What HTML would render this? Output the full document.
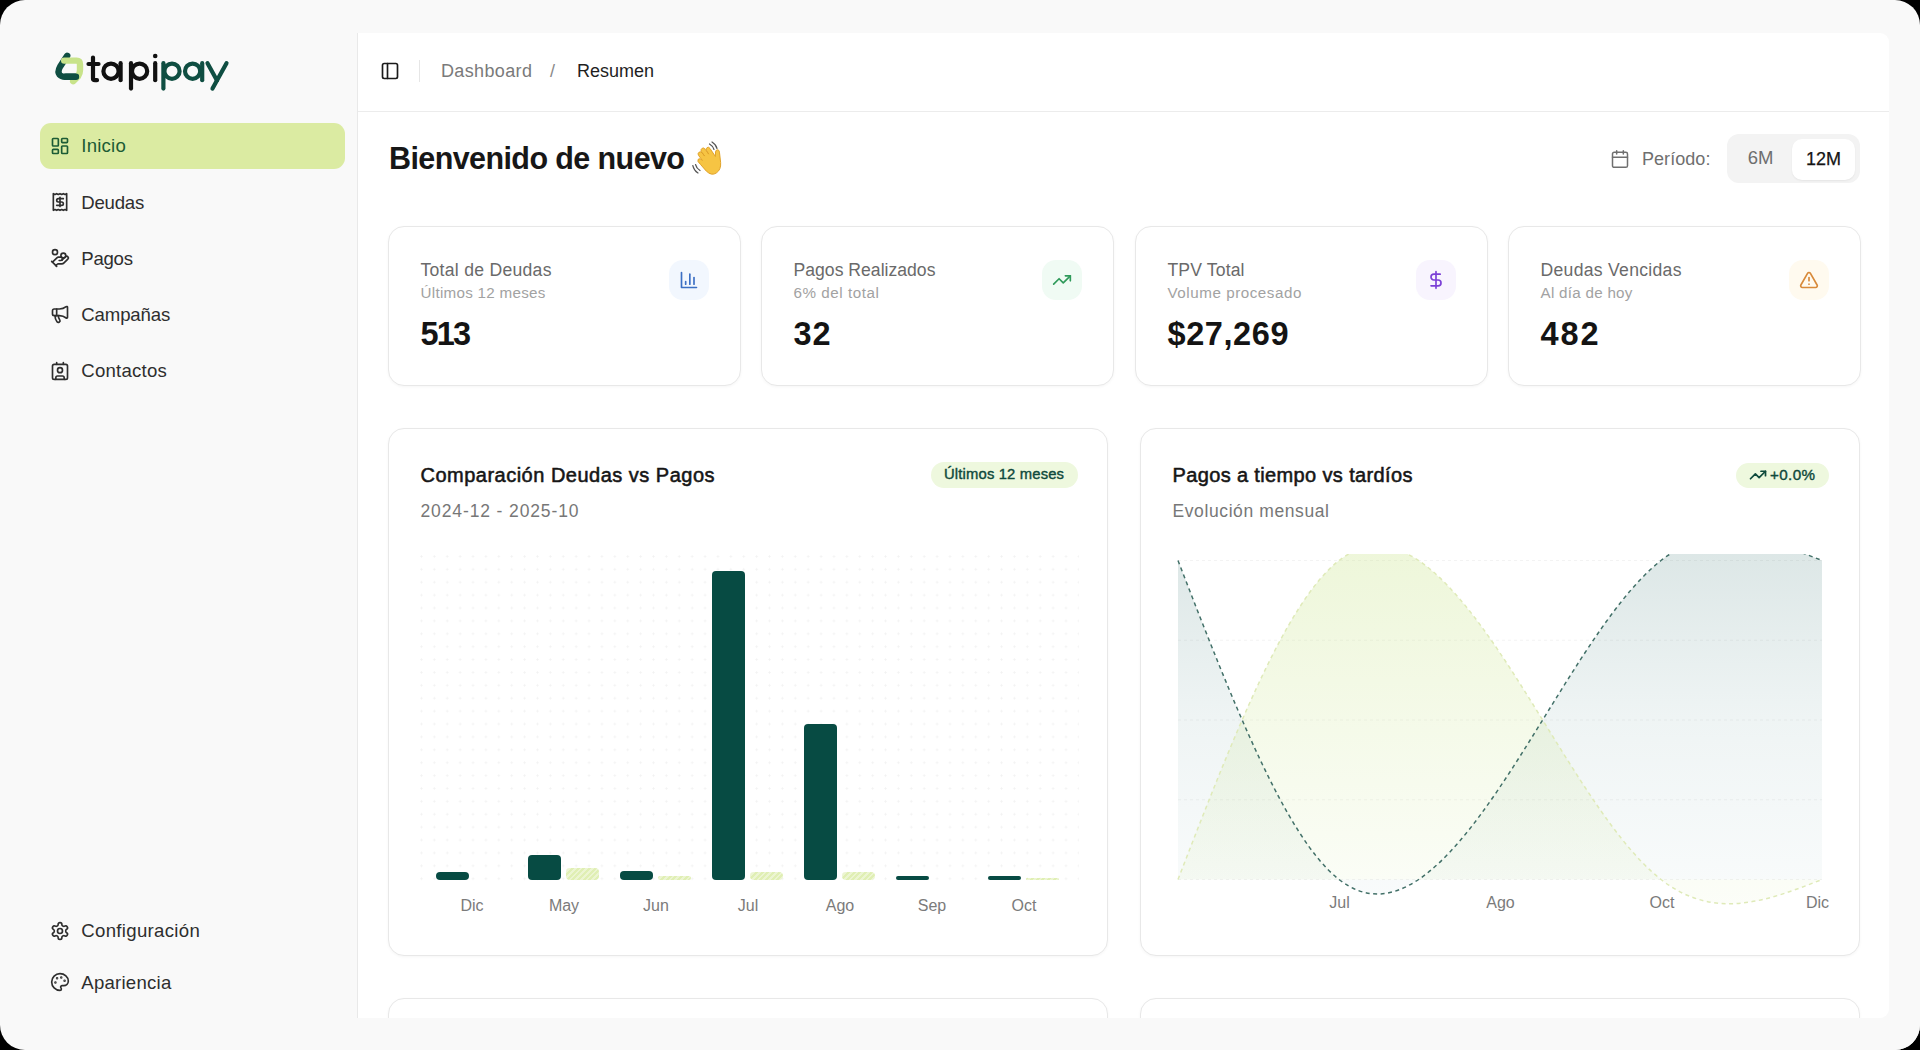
<!DOCTYPE html>
<html><head><meta charset="utf-8"><title>tapipay</title><style>
*{margin:0;padding:0;box-sizing:border-box}
html,body{width:1920px;height:1050px;overflow:hidden;background:#000}
body{font-family:"Liberation Sans",sans-serif}
#win{position:absolute;left:0;top:0;width:1920px;height:1050px;border-radius:25px;background:#f9f9f9;overflow:hidden}
.abs{position:absolute}
.ic{position:absolute;overflow:visible}
.t{position:absolute;white-space:nowrap;line-height:1}
#main{left:357px;top:33px;width:1532px;height:985px;background:#fff;border-left:1px solid #e9e9e9;border-radius:0 9px 9px 0;overflow:hidden}
.card{position:absolute;background:#fff;border:1.5px solid #e8e8e8;border-radius:16px;box-shadow:0 1px 3px rgba(0,0,0,.04)}
.dots{background-image:radial-gradient(circle,#f2f2f2 0.9px,transparent 1.2px);background-size:12.9px 12.9px;background-position:0 0}
.hatch{background:repeating-linear-gradient(135deg,#e0efb4 0 2px,#ecf5d2 2px 4px)}
</style></head>
<body>
<div id="win">
<svg class="ic" style="left:0;top:0;width:260px;height:110px" viewBox="0 0 260 110" fill="none" stroke-linecap="round" stroke-linejoin="round">
<path d="M67.2 55.8 L60.2 66.5 Q57.2 71.8 59.6 74.8 Q61.3 76.8 65 76.8 L76 76.8" stroke="#0f4e42" stroke-width="6.4"/>
<path d="M64.2 60.6 L76.6 60.6 Q80 60.6 80 64.2 L80 70 Q80 73.5 78 76.5 L73.2 81.2" stroke="#c8e38a" stroke-width="6.4"/>
<path d="M66 76.8 L76 76.8" stroke="#0f4e42" stroke-width="6.4"/>
<g stroke="#111" stroke-width="4.2">
<path d="M93 57.5 V78.5 Q93 80.2 95 80.2 H97"/><path d="M88.5 64 H98.5"/>
<circle cx="111" cy="71.2" r="7.6"/><path d="M120.6 63.2 V80.2"/>
<path d="M131 63.2 V88.6"/><circle cx="139.6" cy="71.2" r="7.6"/>
<path d="M155.2 63.2 V80.2"/>
</g>
<circle cx="155.2" cy="56" r="2.3" fill="#111"/>
<g stroke="#0f4e42" stroke-width="4.2">
<path d="M163.4 63.2 V88.6"/><circle cx="172" cy="71.2" r="7.6"/>
<circle cx="192.6" cy="71.2" r="7.6"/><path d="M202.2 63.2 V80.2"/>
<path d="M207.5 63.2 L217 80.5"/><path d="M226.5 63.2 L212.5 88.6"/>
</g>
</svg>
<div class="abs" style="left:40px;top:123px;width:305px;height:45.5px;border-radius:11px;background:#dbeba2"></div>
<svg class="ic" style="left:50px;top:135.7px;width:20px;height:20px" viewBox="0 0 24 24" fill="none" stroke="#1c5c35" stroke-width="2" stroke-linecap="round" stroke-linejoin="round"><rect width="7" height="9" x="3" y="3" rx="1"/><rect width="7" height="5" x="14" y="3" rx="1"/><rect width="7" height="9" x="14" y="12" rx="1"/><rect width="7" height="5" x="3" y="16" rx="1"/></svg>
<div class="t" style="left:81.30px;top:137.36px;font-size:18.6px;color:#1c5c35;letter-spacing:0.216px;">Inicio</div>
<svg class="ic" style="left:50px;top:191.95px;width:20px;height:20px" viewBox="0 0 24 24" fill="none" stroke="#2e2e2e" stroke-width="2" stroke-linecap="round" stroke-linejoin="round"><path d="M4 2v20l2-1 2 1 2-1 2 1 2-1 2 1 2-1 2 1V2l-2 1-2-1-2 1-2-1-2 1-2-1-2 1Z"/><path d="M16 8h-6a2 2 0 1 0 0 4h4a2 2 0 1 1 0 4H8"/><path d="M12 17.5v-11"/></svg>
<div class="t" style="left:81.30px;top:193.61px;font-size:18.6px;color:#2e2e2e;letter-spacing:-0.222px;">Deudas</div>
<svg class="ic" style="left:50px;top:248.2px;width:20px;height:20px" viewBox="0 0 24 24" fill="none" stroke="#2e2e2e" stroke-width="2" stroke-linecap="round" stroke-linejoin="round"><path d="M11 15h2a2 2 0 1 0 0-4h-3c-.6 0-1.1.2-1.4.6L3 17"/><path d="m7 21 1.6-1.4c.3-.4.8-.6 1.4-.6h4c1.1 0 2.1-.4 2.8-1.2l4.6-4.4a2 2 0 0 0-2.75-2.91l-4.2 3.9"/><path d="m2 16 6 6"/><circle cx="16" cy="9" r="2.9"/><circle cx="6" cy="5" r="3"/></svg>
<div class="t" style="left:81.30px;top:249.86px;font-size:18.6px;color:#2e2e2e;letter-spacing:-0.260px;">Pagos</div>
<svg class="ic" style="left:50px;top:304.45px;width:20px;height:20px" viewBox="0 0 24 24" fill="none" stroke="#2e2e2e" stroke-width="2" stroke-linecap="round" stroke-linejoin="round"><path d="M11 6a13 13 0 0 0 8.4-2.8A1 1 0 0 1 21 4v12a1 1 0 0 1-1.6.8A13 13 0 0 0 11 14H5a2 2 0 0 1-2-2V8a2 2 0 0 1 2-2z"/><path d="M6 14a12 12 0 0 0 2.4 7.2 2 2 0 0 0 3.2-2.4A8 8 0 0 1 10 14"/><path d="M8 6v8"/></svg>
<div class="t" style="left:81.30px;top:306.11px;font-size:18.6px;color:#2e2e2e;letter-spacing:-0.136px;">Campañas</div>
<svg class="ic" style="left:50px;top:360.7px;width:20px;height:20px" viewBox="0 0 24 24" fill="none" stroke="#2e2e2e" stroke-width="2" stroke-linecap="round" stroke-linejoin="round"><path d="M16 2v2"/><path d="M7 22v-2a2 2 0 0 1 2-2h6a2 2 0 0 1 2 2v2"/><path d="M8 2v2"/><circle cx="12" cy="11" r="3"/><rect x="3" y="4" width="18" height="18" rx="2"/></svg>
<div class="t" style="left:81.30px;top:362.36px;font-size:18.6px;color:#2e2e2e;letter-spacing:0.219px;">Contactos</div>
<svg class="ic" style="left:50px;top:920.7px;width:20px;height:20px" viewBox="0 0 24 24" fill="none" stroke="#2e2e2e" stroke-width="2" stroke-linecap="round" stroke-linejoin="round"><path d="M12.22 2h-.44a2 2 0 0 0-2 2v.18a2 2 0 0 1-1 1.73l-.43.25a2 2 0 0 1-2 0l-.15-.08a2 2 0 0 0-2.73.73l-.22.38a2 2 0 0 0 .73 2.73l.15.1a2 2 0 0 1 1 1.72v.51a2 2 0 0 1-1 1.74l-.15.09a2 2 0 0 0-.73 2.73l.22.38a2 2 0 0 0 2.73.73l.15-.08a2 2 0 0 1 2 0l.43.25a2 2 0 0 1 1 1.73V20a2 2 0 0 0 2 2h.44a2 2 0 0 0 2-2v-.18a2 2 0 0 1 1-1.73l.43-.25a2 2 0 0 1 2 0l.15.08a2 2 0 0 0 2.73-.73l.22-.39a2 2 0 0 0-.73-2.73l-.15-.08a2 2 0 0 1-1-1.74v-.5a2 2 0 0 1 1-1.74l.15-.09a2 2 0 0 0 .73-2.73l-.22-.38a2 2 0 0 0-2.73-.73l-.15.08a2 2 0 0 1-2 0l-.43-.25a2 2 0 0 1-1-1.73V4a2 2 0 0 0-2-2z"/><circle cx="12" cy="12" r="3"/></svg>
<div class="t" style="left:81.30px;top:922.36px;font-size:18.6px;color:#2e2e2e;letter-spacing:0.311px;">Configuración</div>
<svg class="ic" style="left:50px;top:971.95px;width:20px;height:20px" viewBox="0 0 24 24" fill="none" stroke="#2e2e2e" stroke-width="2" stroke-linecap="round" stroke-linejoin="round"><circle cx="13.5" cy="6.5" r=".5" fill="currentColor"/><circle cx="17.5" cy="10.5" r=".5" fill="currentColor"/><circle cx="8.5" cy="7.5" r=".5" fill="currentColor"/><circle cx="6.5" cy="12.5" r=".5" fill="currentColor"/><path d="M12 2C6.5 2 2 6.5 2 12s4.5 10 10 10c.926 0 1.648-.746 1.648-1.688 0-.437-.18-.835-.437-1.125-.29-.289-.438-.652-.438-1.125a1.64 1.64 0 0 1 1.668-1.668h1.996c3.051 0 5.555-2.503 5.555-5.554C21.965 6.012 17.461 2 12 2z"/></svg>
<div class="t" style="left:81.30px;top:973.61px;font-size:18.6px;color:#2e2e2e;letter-spacing:0.234px;">Apariencia</div>
<div class="abs" id="main"></div>
<div class="abs" style="left:358px;top:111px;width:1531px;height:1px;background:#ececec"></div>
<svg class="ic" style="left:380.3px;top:60.7px;width:20px;height:20px" viewBox="0 0 24 24" fill="none" stroke="#1a1a1a" stroke-width="2" stroke-linecap="round" stroke-linejoin="round"><rect width="18" height="18" x="3" y="3" rx="2"/><path d="M9 3v18"/></svg>
<div class="abs" style="left:418.5px;top:60px;width:1px;height:22px;background:#e6e6e6"></div>
<div class="t" style="left:441.00px;top:62.26px;font-size:18px;color:#7a7a7a;letter-spacing:0.367px;">Dashboard</div>
<div class="t" style="left:550.00px;top:62.26px;font-size:18px;color:#8a8a8a;">/</div>
<div class="t" style="left:577.00px;top:62.26px;font-size:18px;color:#1f1f1f;letter-spacing:-0.006px;">Resumen</div>
<div class="t" style="left:389.00px;top:143.18px;font-size:30.5px;color:#171717;font-weight:700;letter-spacing:-0.597px;">Bienvenido de nuevo</div>
<svg class="ic" style="left:689px;top:138px;width:44px;height:44px" viewBox="0 0 44 44">
<g transform="rotate(-38 22 22) translate(-1 0)">
<path d="M12 19 Q11 14 13.5 13.5 Q15.5 13.2 16 17 L16 11 Q16 8.5 18.2 8.5 Q20.4 8.5 20.4 11 L20.4 15 L20.6 9.6 Q20.8 7.2 23 7.3 Q25.1 7.4 25 9.8 L24.8 16 L25.3 11.8 Q25.6 9.6 27.6 9.8 Q29.5 10 29.3 12.3 L28.6 22 L31.5 18.5 Q33.2 16.8 34.6 18 Q35.7 19.2 34.5 21 L29 30 Q25 36 19 35.5 Q13.5 35 12.5 28 Z" fill="#f6c443" stroke="#e0a22a" stroke-width="0.9"/>
</g>
<path d="M20.5 6 Q24 8 25 11.5" stroke="#555" stroke-width="1.2" fill="none" stroke-linecap="round"/>
<path d="M23 4 Q27 6.5 28 10.5" stroke="#555" stroke-width="1.2" fill="none" stroke-linecap="round"/>
<path d="M6.5 26.5 Q7.5 30.5 11 32.5" stroke="#555" stroke-width="1.2" fill="none" stroke-linecap="round"/>
<path d="M3.8 27.5 Q5 32.5 9 35" stroke="#555" stroke-width="1.2" fill="none" stroke-linecap="round"/>
</svg>
<svg class="ic" style="left:1610.3px;top:148.8px;width:20px;height:20px" viewBox="0 0 24 24" fill="none" stroke="#6f6f6f" stroke-width="1.8" stroke-linecap="round" stroke-linejoin="round"><path d="M8 2v4"/><path d="M16 2v4"/><rect width="18" height="18" x="3" y="4" rx="2"/><path d="M3 10h18"/></svg>
<div class="t" style="left:1642.00px;top:149.76px;font-size:18px;color:#6f6f6f;letter-spacing:0.050px;">Período:</div>
<div class="abs" style="left:1727px;top:134px;width:133px;height:49px;border-radius:12px;background:#f3f3f3"></div>
<div class="abs" style="left:1792px;top:138.5px;width:63px;height:41px;border-radius:10px;background:#fff;box-shadow:0 1px 2px rgba(0,0,0,.06)"></div>
<div class="t" style="left:1747.70px;top:149.34px;font-size:18.5px;color:#6e6e6e;">6M</div>
<div class="t" style="left:1806.00px;top:149.76px;font-size:18px;color:#151515;-webkit-text-stroke:0.25px #151515;">12M</div>
<div class="card" style="left:388px;top:226px;width:353px;height:160px"></div>
<div class="t" style="left:420.50px;top:262.30px;font-size:17.6px;color:#6a6a6a;letter-spacing:0.272px;">Total de Deudas</div>
<div class="t" style="left:420.50px;top:285.13px;font-size:15.2px;color:#a2a2a2;letter-spacing:0.280px;">Últimos 12 meses</div>
<div class="t" style="left:420.50px;top:317.69px;font-size:32.5px;color:#141414;font-weight:700;letter-spacing:-1.863px;">513</div>
<div class="abs" style="left:669px;top:260px;width:40px;height:40px;border-radius:14px;background:#f2f7fe"></div>
<svg class="ic" style="left:679px;top:270px;width:20px;height:20px" viewBox="0 0 24 24" fill="none" stroke="#3b6fc4" stroke-width="2" stroke-linecap="round" stroke-linejoin="round"><path d="M3 3v18h18"/><path d="M18 17V9"/><path d="M13 17V5"/><path d="M8 17v-3"/></svg>
<div class="card" style="left:761px;top:226px;width:353px;height:160px"></div>
<div class="t" style="left:793.50px;top:262.30px;font-size:17.6px;color:#6a6a6a;letter-spacing:0.009px;">Pagos Realizados</div>
<div class="t" style="left:793.50px;top:285.13px;font-size:15.2px;color:#a2a2a2;letter-spacing:0.552px;">6% del total</div>
<div class="t" style="left:793.50px;top:317.69px;font-size:32.5px;color:#141414;font-weight:700;letter-spacing:0.849px;">32</div>
<div class="abs" style="left:1042px;top:260px;width:40px;height:40px;border-radius:14px;background:#f0fbf4"></div>
<svg class="ic" style="left:1052px;top:270px;width:20px;height:20px" viewBox="0 0 24 24" fill="none" stroke="#2f9a5a" stroke-width="2" stroke-linecap="round" stroke-linejoin="round"><polyline points="22 7 13.5 15.5 8.5 10.5 2 17"/><polyline points="16 7 22 7 22 13"/></svg>
<div class="card" style="left:1135px;top:226px;width:353px;height:160px"></div>
<div class="t" style="left:1167.50px;top:262.30px;font-size:17.6px;color:#6a6a6a;letter-spacing:0.128px;">TPV Total</div>
<div class="t" style="left:1167.50px;top:285.13px;font-size:15.2px;color:#a2a2a2;letter-spacing:0.539px;">Volume procesado</div>
<div class="t" style="left:1167.50px;top:317.69px;font-size:32.5px;color:#141414;font-weight:700;letter-spacing:0.586px;">$27,269</div>
<div class="abs" style="left:1416px;top:260px;width:40px;height:40px;border-radius:14px;background:#f8f4fe"></div>
<svg class="ic" style="left:1426px;top:270px;width:20px;height:20px" viewBox="0 0 24 24" fill="none" stroke="#7b3fd6" stroke-width="2" stroke-linecap="round" stroke-linejoin="round"><line x1="12" x2="12" y1="2" y2="22"/><path d="M17 5H9.5a3.5 3.5 0 0 0 0 7h5a3.5 3.5 0 0 1 0 7H6"/></svg>
<div class="card" style="left:1508px;top:226px;width:353px;height:160px"></div>
<div class="t" style="left:1540.50px;top:262.30px;font-size:17.6px;color:#6a6a6a;letter-spacing:0.287px;">Deudas Vencidas</div>
<div class="t" style="left:1540.50px;top:285.13px;font-size:15.2px;color:#a2a2a2;letter-spacing:0.272px;">Al día de hoy</div>
<div class="t" style="left:1540.50px;top:317.69px;font-size:32.5px;color:#141414;font-weight:700;letter-spacing:1.887px;">482</div>
<div class="abs" style="left:1789px;top:260px;width:40px;height:40px;border-radius:14px;background:#fffaef"></div>
<svg class="ic" style="left:1799px;top:270px;width:20px;height:20px" viewBox="0 0 24 24" fill="none" stroke="#d88a3a" stroke-width="2" stroke-linecap="round" stroke-linejoin="round"><path d="m21.73 18-8-14a2 2 0 0 0-3.48 0l-8 14A2 2 0 0 0 4 21h16a2 2 0 0 0 1.73-3"/><path d="M12 9v4"/><path d="M12 17h.01"/></svg>
<div class="card" style="left:388px;top:428px;width:720px;height:528px"></div>
<div class="card" style="left:1140px;top:428px;width:720px;height:528px"></div>
<div class="card" style="left:388px;top:998px;width:720px;height:80px"></div>
<div class="card" style="left:1140px;top:998px;width:720px;height:80px"></div>
<div class="t" style="left:420.50px;top:464.77px;font-size:20px;color:#161616;letter-spacing:0.490px;-webkit-text-stroke:0.55px #161616;">Comparación Deudas vs Pagos</div>
<div class="t" style="left:420.50px;top:503.19px;font-size:17.5px;color:#777777;letter-spacing:0.875px;">2024-12 - 2025-10</div>
<div class="abs" style="left:931px;top:462px;width:146.5px;height:26px;border-radius:13px;background:#eef8de"></div>
<div class="t" style="left:944.00px;top:467.07px;font-size:14.8px;color:#0f4a3c;letter-spacing:0.159px;-webkit-text-stroke:0.4px #0f4a3c;">Últimos 12 meses</div>
<div class="t" style="left:1172.50px;top:464.77px;font-size:20px;color:#161616;letter-spacing:0.365px;-webkit-text-stroke:0.55px #161616;">Pagos a tiempo vs tardíos</div>
<div class="t" style="left:1172.50px;top:503.19px;font-size:17.5px;color:#777777;letter-spacing:0.601px;">Evolución mensual</div>
<div class="abs" style="left:1736px;top:462.5px;width:92.5px;height:25px;border-radius:13px;background:#eef8de"></div>
<svg class="ic" style="left:1748.5px;top:466px;width:18px;height:18px" viewBox="0 0 24 24" fill="none" stroke="#0f4a3c" stroke-width="2.3" stroke-linecap="round" stroke-linejoin="round"><polyline points="22 7 13.5 15.5 8.5 10.5 2 17"/><polyline points="16 7 22 7 22 13"/></svg>
<div class="t" style="left:1770.00px;top:466.73px;font-size:15.2px;color:#0f4a3c;letter-spacing:0.370px;-webkit-text-stroke:0.4px #0f4a3c;">+0.0%</div>
<div class="abs dots" style="left:415px;top:550px;width:664px;height:333px"></div>
<div class="abs" style="left:435.5px;top:872px;width:33px;height:8px;border-radius:4px;background:#074b43"></div>
<div class="abs" style="left:527.5px;top:855px;width:33px;height:25px;border-radius:4px;background:#074b43"></div>
<div class="abs hatch" style="left:566px;top:867.5px;width:33px;height:12.5px;border-radius:4px"></div>
<div class="abs" style="left:619.5px;top:870.5px;width:33px;height:9.5px;border-radius:4px;background:#074b43"></div>
<div class="abs hatch" style="left:658px;top:875.5px;width:33px;height:4.5px;border-radius:2.25px"></div>
<div class="abs" style="left:711.5px;top:571px;width:33px;height:309px;border-radius:4px;background:#074b43"></div>
<div class="abs hatch" style="left:750px;top:872px;width:33px;height:8px;border-radius:4px"></div>
<div class="abs" style="left:803.5px;top:724px;width:33px;height:156px;border-radius:4px;background:#074b43"></div>
<div class="abs hatch" style="left:842px;top:872px;width:33px;height:8px;border-radius:4px"></div>
<div class="abs" style="left:895.5px;top:876px;width:33px;height:4px;border-radius:2.0px;background:#074b43"></div>
<div class="abs" style="left:987.5px;top:876px;width:33px;height:4px;border-radius:2.0px;background:#074b43"></div>
<div class="abs hatch" style="left:1026px;top:878px;width:33px;height:2px;border-radius:1.0px"></div>
<div class="t" style="left:460.44px;top:897.86px;font-size:16px;color:#7b7b7b;">Dic</div>
<div class="t" style="left:548.89px;top:897.86px;font-size:16px;color:#7b7b7b;">May</div>
<div class="t" style="left:643.10px;top:897.86px;font-size:16px;color:#7b7b7b;">Jun</div>
<div class="t" style="left:737.77px;top:897.86px;font-size:16px;color:#7b7b7b;">Jul</div>
<div class="t" style="left:825.76px;top:897.86px;font-size:16px;color:#7b7b7b;">Ago</div>
<div class="t" style="left:917.76px;top:897.86px;font-size:16px;color:#7b7b7b;">Sep</div>
<div class="t" style="left:1011.55px;top:897.86px;font-size:16px;color:#7b7b7b;">Oct</div>
<svg class="ic" style="left:1140px;top:428px;width:720px;height:528px" viewBox="0 0 720 528">
<defs>
<linearGradient id="gd" x1="0" y1="0" x2="0" y2="1"><stop offset="0" stop-color="#0d5550" stop-opacity=".15"/><stop offset="0.5" stop-color="#136060" stop-opacity=".07"/><stop offset="1" stop-color="#2a7a80" stop-opacity=".03"/></linearGradient>
<linearGradient id="gl" x1="0" y1="0" x2="0" y2="1"><stop offset="0" stop-color="#c9e48a" stop-opacity=".32"/><stop offset="1" stop-color="#c9e48a" stop-opacity=".06"/></linearGradient>
<clipPath id="cp"><rect x="0" y="126" width="720" height="402"/></clipPath>
</defs>
<line x1="38" x2="682" y1="132.5" y2="132.5" stroke="#f3f3f3" stroke-dasharray="3 3"/><line x1="38" x2="682" y1="212.25" y2="212.25" stroke="#f3f3f3" stroke-dasharray="3 3"/><line x1="38" x2="682" y1="292" y2="292" stroke="#f3f3f3" stroke-dasharray="3 3"/><line x1="38" x2="682" y1="371.75" y2="371.75" stroke="#f3f3f3" stroke-dasharray="3 3"/><line x1="38" x2="682" y1="451.5" y2="451.5" stroke="#f3f3f3" stroke-dasharray="3 3"/>
<g clip-path="url(#cp)">
<path d="M38.00,132.50C91.67,271.04,145.33,409.57,199.00,451.50C252.67,493.43,306.33,438.74,360.00,358.99C413.67,279.24,467.33,174.43,521.00,132.50C574.67,90.57,628.33,111.54,682.00,132.50L682,451.5L38,451.5Z" fill="url(#gd)"/>
<path d="M38.00,451.50C91.67,312.96,145.33,174.43,199.00,132.50C252.67,90.57,306.33,145.26,360.00,225.01C413.67,304.76,467.33,409.57,521.00,451.50C574.67,493.43,628.33,472.46,682.00,451.50L682,451.5L38,451.5Z" fill="url(#gl)"/>
<path d="M38.00,132.50C91.67,271.04,145.33,409.57,199.00,451.50C252.67,493.43,306.33,438.74,360.00,358.99C413.67,279.24,467.33,174.43,521.00,132.50C574.67,90.57,628.33,111.54,682.00,132.50" fill="none" stroke="#427068" stroke-width="1.5" stroke-dasharray="4 3.5"/>
<path d="M38.00,451.50C91.67,312.96,145.33,174.43,199.00,132.50C252.67,90.57,306.33,145.26,360.00,225.01C413.67,304.76,467.33,409.57,521.00,451.50C574.67,493.43,628.33,472.46,682.00,451.50" fill="none" stroke="#dfeab8" stroke-width="1.5" stroke-dasharray="4 3.5"/>
</g>
</svg>
<div class="t" style="left:1329.27px;top:895.26px;font-size:16px;color:#7b7b7b;">Jul</div>
<div class="t" style="left:1486.27px;top:895.26px;font-size:16px;color:#7b7b7b;">Ago</div>
<div class="t" style="left:1649.56px;top:895.26px;font-size:16px;color:#7b7b7b;">Oct</div>
<div class="t" style="left:1805.94px;top:895.26px;font-size:16px;color:#7b7b7b;">Dic</div>
<div class="abs" style="left:357px;top:1018px;width:1563px;height:40px;background:#f9f9f9"></div>
</div>
</body></html>
